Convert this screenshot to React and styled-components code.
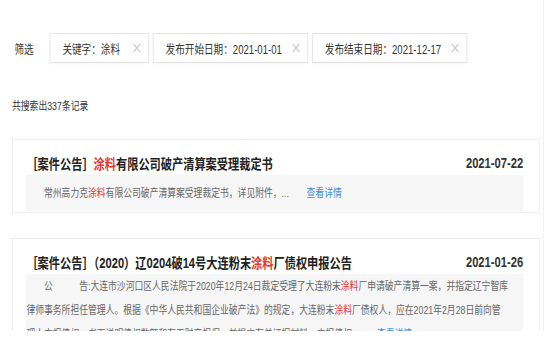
import React from 'react';
import styled, { createGlobalStyle } from 'styled-components';

const GlobalStyle = createGlobalStyle`
  html, body {
    margin: 0;
    padding: 0;
    background: #fff;
    overflow: hidden;
  }
  body {
    font-family: "Liberation Sans", "Noto Sans CJK SC", sans-serif;
    color: #333;
  }
`;

// the reference is a horizontally squeezed capture, so the page is drawn
// at its natural width and narrowed by 0.8
const Stage = styled.div`
  width: 688px;
  transform: scaleX(0.8);
  transform-origin: 0 0;
`;

const Panel = styled.div`
  box-sizing: border-box;
  width: 680px;
  height: 331px;
  overflow: hidden;
  padding: 33px 4px 0 15px;
  border-right: 1px solid #efefef;
`;

const FilterRow = styled.div`
  display: flex;
  align-items: center;
  padding-left: 3px;
`;

const FilterLabel = styled.div`
  font-size: 12px;
  color: #333;
  margin-right: 20px;
`;

const Tags = styled.div`
  display: flex;
  gap: 5px;
`;

const Tag = styled.div`
  box-sizing: border-box;
  display: flex;
  align-items: center;
  justify-content: space-between;
  width: ${(p) => p.width}px;
  height: 30px;
  padding: 0 9px 0 15px;
  border: 1px solid #e3e3e3;
  background: #fff;
  box-shadow: 0 1px 2px rgba(0, 0, 0, 0.04);
  font-size: 12px;
  color: #333;
`;

const Close = styled.svg`
  width: 10px;
  height: 10px;
  flex: none;
`;

const Total = styled.div`
  margin-top: 35px;
  font-size: 11px;
  line-height: 16px;
  color: #333;
`;

const Card = styled.div`
  box-sizing: border-box;
  width: 660px;
  margin-top: 25px;
  padding: 13px 20px 1px 17px;
  border: 1px solid #ececec;
  background: #fff;
`;

const TitleRow = styled.div`
  display: flex;
  align-items: center;
  justify-content: space-between;
  height: 20px;
`;

const Title = styled.div`
  font-size: 14px;
  font-weight: bold;
  color: #222;
  white-space: nowrap;
`;

const Date = styled.div`
  font-size: 14px;
  font-weight: bold;
  color: #333;
`;

const Summary = styled.div`
  margin-top: 2px;
  padding: ${(p) => p.padY}px 0;
  background: #f6f6f6;
  font-size: 11px;
  line-height: 24px;
  color: #666;
  text-indent: 2em;
  white-space: nowrap;
`;

const Mark = styled.span`
  color: #e5352f;
`;

const More = styled.a`
  color: #3b8fe0;
  margin-left: 22px;
  text-decoration: none;
`;

const CloseIcon = () => (
  <Close viewBox="0 0 10 10">
    <path d="M1 1L9 9M9 1L1 9" stroke="#c4c4c4" strokeWidth="1.1" fill="none" />
  </Close>
);

export default function App() {
  return (
    <>
      <GlobalStyle />
      <Stage>
        <Panel>
          <FilterRow>
            <FilterLabel>筛选</FilterLabel>
            <Tags>
              <Tag width={124}>
                <span>关键字：涂料</span>
                <CloseIcon />
              </Tag>
              <Tag width={194}>
                <span>发布开始日期：2021-01-01</span>
                <CloseIcon />
              </Tag>
              <Tag width={194}>
                <span>发布结束日期：2021-12-17</span>
                <CloseIcon />
              </Tag>
            </Tags>
          </FilterRow>

          <Total>共搜索出337条记录</Total>

          <Card>
            <TitleRow>
              <Title>
                ［案件公告］<Mark>涂料</Mark>有限公司破产清算案受理裁定书
              </Title>
              <Date>2021-07-22</Date>
            </TitleRow>
            <Summary padY={6}>
              常州高力克<Mark>涂料</Mark>有限公司破产清算案受理裁定书，详见附件，...
              <More href="#">查看详情</More>
            </Summary>
          </Card>

          <Card>
            <TitleRow>
              <Title>
                ［案件公告］（2020）辽0204破14号大连粉末<Mark>涂料</Mark>厂债权申报公告
              </Title>
              <Date>2021-01-26</Date>
            </TitleRow>
            <Summary padY={0}>
              公　　　告:大连市沙河口区人民法院于2020年12月24日裁定受理了大连粉末<Mark>涂料</Mark>厂申请破产清算一案，并指定辽宁智库
              <br />
              律师事务所担任管理人。根据《中华人民共和国企业破产法》的规定，大连粉末<Mark>涂料</Mark>厂债权人，应在2021年2月28日前向管
              <br />
              理人申报债权，书面说明债权数额和有无财产担保，并提交有关证据材料。申报债权...
              <More href="#">查看详情</More>
            </Summary>
          </Card>
        </Panel>
      </Stage>
    </>
  );
}
